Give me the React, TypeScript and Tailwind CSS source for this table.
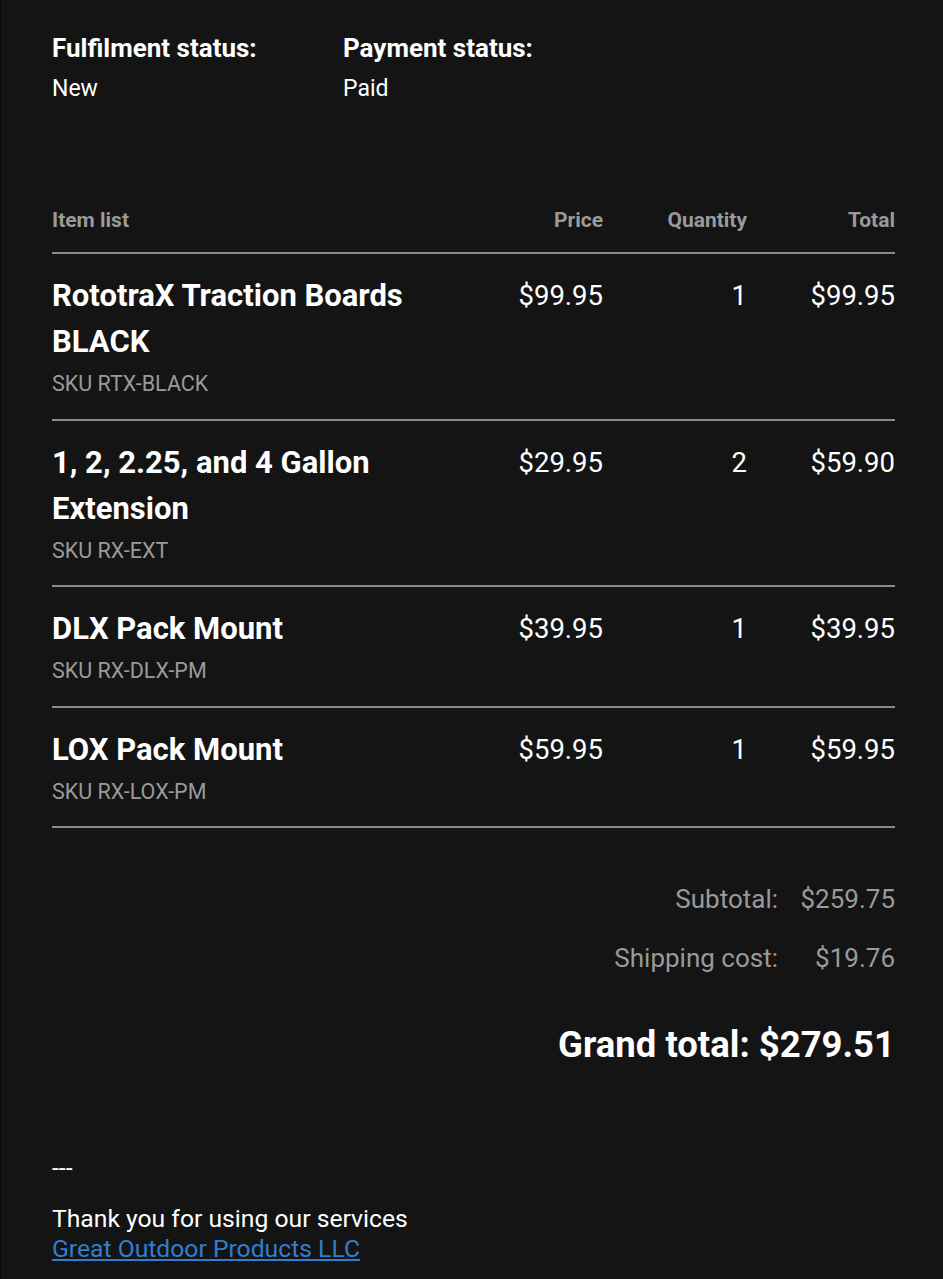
import React from "react";

const items = [
  { name: "RototraX Traction Boards BLACK", sku: "SKU RTX-BLACK", price: "$99.95", qty: "1", total: "$99.95" },
  { name: "1, 2, 2.25, and 4 Gallon Extension", sku: "SKU RX-EXT", price: "$29.95", qty: "2", total: "$59.90" },
  { name: "DLX Pack Mount", sku: "SKU RX-DLX-PM", price: "$39.95", qty: "1", total: "$39.95" },
  { name: "LOX Pack Mount", sku: "SKU RX-LOX-PM", price: "$59.95", qty: "1", total: "$59.95" },
];

export default function App() {
  return (
    <div className="min-h-[1279px] w-full bg-[#141414] text-white border-l border-[#0a0a0a]" style={{ fontFamily: "Roboto, 'Noto Sans', sans-serif" }}>
      <div className="pl-[51px] pr-[48px] pt-[32px] pb-[20px]">
        {/* Status */}
        <div className="flex">
          <div className="w-[291px]">
            <div className="text-[26px] leading-[32px] font-bold">Fulfilment status:</div>
            <div className="text-[23px] leading-[32px] mt-[9px]">New</div>
          </div>
          <div>
            <div className="text-[26px] leading-[32px] font-bold">Payment status:</div>
            <div className="text-[23px] leading-[32px] mt-[9px]">Paid</div>
          </div>
        </div>

        {/* Table */}
        <div className="mt-[100px]">
          <div className="grid grid-cols-[1fr_150px_144px_148px] text-[21px] leading-[30px] font-bold text-[#9a9a9a] pb-[17px] border-b-2 border-[#8a8a8a]">
            <div>Item list</div>
            <div className="text-right">Price</div>
            <div className="text-right">Quantity</div>
            <div className="text-right">Total</div>
          </div>
          {items.map((it) => (
            <div key={it.sku} className="grid grid-cols-[1fr_150px_144px_148px] pt-[19px] pb-[19.5px] border-b-2 border-[#8a8a8a]">
              <div>
                <div className="text-[31px] leading-[46px] font-bold">{it.name}</div>
                <div className="text-[21.5px] leading-[30px] text-[#9a9a9a] mt-[4px]">{it.sku}</div>
              </div>
              <div className="text-right text-[27.5px] leading-[46px]">{it.price}</div>
              <div className="text-right text-[27.5px] leading-[46px]">{it.qty}</div>
              <div className="text-right text-[27.5px] leading-[46px]">{it.total}</div>
            </div>
          ))}
        </div>

        {/* Totals */}
        <div className="mt-[54px] flex flex-col items-end text-[26px] text-[#9a9a9a]">
          <div className="flex leading-[34px]">
            <span>Subtotal:</span>
            <span className="w-[117px] text-right">$259.75</span>
          </div>
          <div className="flex leading-[34px] mt-[25px]">
            <span>Shipping cost:</span>
            <span className="w-[117px] text-right">$19.76</span>
          </div>
          <div className="mt-[46px] text-[36.5px] leading-[48px] font-bold text-white">Grand total: $279.51</div>
        </div>

        {/* Footer */}
        <div className="mt-[84px] text-[24.7px]">
          <div className="leading-[30px]">---</div>
          <div className="mt-[21px] leading-[30px]">Thank you for using our services</div>
          <a href="#" className="block w-fit leading-[30px] text-[#2f7fd0] underline">Great Outdoor Products LLC</a>
        </div>
      </div>
    </div>
  );
}
